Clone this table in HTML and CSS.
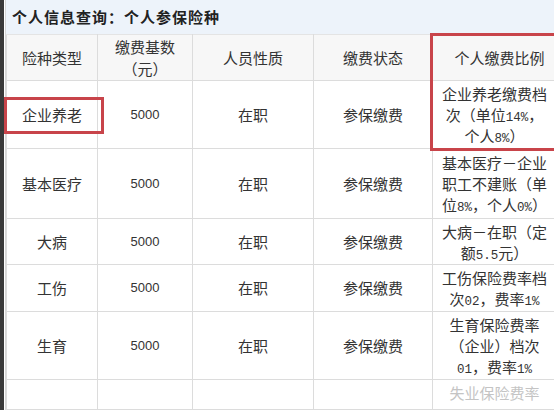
FILE: index.html
```html
<!DOCTYPE html>
<html lang="zh">
<head>
<meta charset="utf-8">
<link rel="stylesheet" href="styles.css">
</head>
<body>
<div class="strip"></div>
<div class="panel">
  <div class="title">个人信息查询：个人参保险种</div>
  <table class="grid">
    <colgroup>
      <col class="c1"><col class="c2"><col class="c3"><col class="c4"><col class="c5">
    </colgroup>
    <thead>
      <tr class="h46">
        <th>险种类型</th>
        <th>缴费基数<br>（元）</th>
        <th>人员性质</th>
        <th>缴费状态</th>
        <th>个人缴费比例</th>
      </tr>
    </thead>
    <tbody>
      <tr class="h68">
        <td>企业养老</td><td class="num">5000</td><td>在职</td><td>参保缴费</td>
        <td class="rate">企业养老缴费档次（单位<span class="lat">14%</span>，个人<span class="lat">8%</span>）</td>
      </tr>
      <tr class="h70">
        <td>基本医疗</td><td class="num">5000</td><td>在职</td><td>参保缴费</td>
        <td class="rate">基本医疗－企业职工不建账（单位<span class="lat">8%</span>，个人<span class="lat">0%</span>）</td>
      </tr>
      <tr class="h46">
        <td>大病</td><td class="num">5000</td><td>在职</td><td>参保缴费</td>
        <td class="rate">大病－在职（定额<span class="lat">5.5</span>元）</td>
      </tr>
      <tr class="h47">
        <td>工伤</td><td class="num">5000</td><td>在职</td><td>参保缴费</td>
        <td class="rate">工伤保险费率档次<span class="lat">02</span>，费率<span class="lat">1%</span></td>
      </tr>
      <tr class="h68">
        <td>生育</td><td class="num">5000</td><td>在职</td><td>参保缴费</td>
        <td class="rate">生育保险费率（企业）档次<span class="lat">01</span>，费率<span class="lat">1%</span></td>
      </tr>
      <tr class="last">
        <td></td><td></td><td></td><td></td>
        <td class="rate top">失业保险费率</td>
      </tr>
    </tbody>
  </table>
  <div class="mark mark-type"></div>
  <div class="mark mark-rate"></div>
</div>
</body>
</html>
```

FILE: styles.css
```css
html, body {
  margin: 0;
  padding: 0;
  height: 100%;
  overflow: hidden;
}
body {
  display: flex;
  background: #ffffff;
  font-family: "Noto Sans CJK SC", "Liberation Sans", sans-serif;
  color: #333333;
}
.strip {
  width: 4px;
  flex: none;
  background: #3a3a3a;
}
.panel {
  position: relative;
  flex: 1;
  margin-left: 1px;
  border-left: 1px solid #d6d6d6;
}
.title {
  height: 34px;
  box-sizing: border-box;
  padding-left: 6px;
  background: #edf3fa;
  font-size: 15px;
  font-weight: bold;
  line-height: 33px;
  color: #222;
  letter-spacing: 1px;
}
.grid {
  border-collapse: collapse;
  table-layout: fixed;
  width: 560px;
}
.c1 { width: 91px; }
.c2 { width: 95px; }
.c3 { width: 121px; }
.c4 { width: 119px; }
.c5 { width: 134px; }
.grid th, .grid td {
  border: 1px solid #dcdcdc;
  text-align: center;
  vertical-align: middle;
  font-size: 15px;
  font-weight: normal;
  line-height: 22px;
  padding: 0 4px;
  color: #333;
}
.grid th {
  background: #f7f7f7;
}
.grid tr:first-child th { border-top-color: #e4e4e4; }
.grid td.num {
  font-family: "Liberation Sans", sans-serif;
  font-size: 13px;
}
.grid td.rate {
  padding: 0 16px 0 6px;
  line-height: 21px;
}
.lat {
  font-family: "Liberation Mono", monospace;
  font-size: 12.5px;
  line-height: 12px;
}
.grid td.top {
  vertical-align: top;
  padding-top: 2px;
  color: #c4c4c4;
}
.h46 { height: 46px; }
.h47 { height: 47px; }
.h68 { height: 68px; }
.h70 { height: 70px; }
.last { height: 30px; }
.mark {
  position: absolute;
  border: 3px solid #c8444a;
  box-sizing: border-box;
}
.mark-type {
  left: -2px;
  top: 97px;
  width: 100px;
  height: 37px;
}
.mark-rate {
  left: 424px;
  top: 33px;
  width: 140px;
  height: 118px;
}
```
